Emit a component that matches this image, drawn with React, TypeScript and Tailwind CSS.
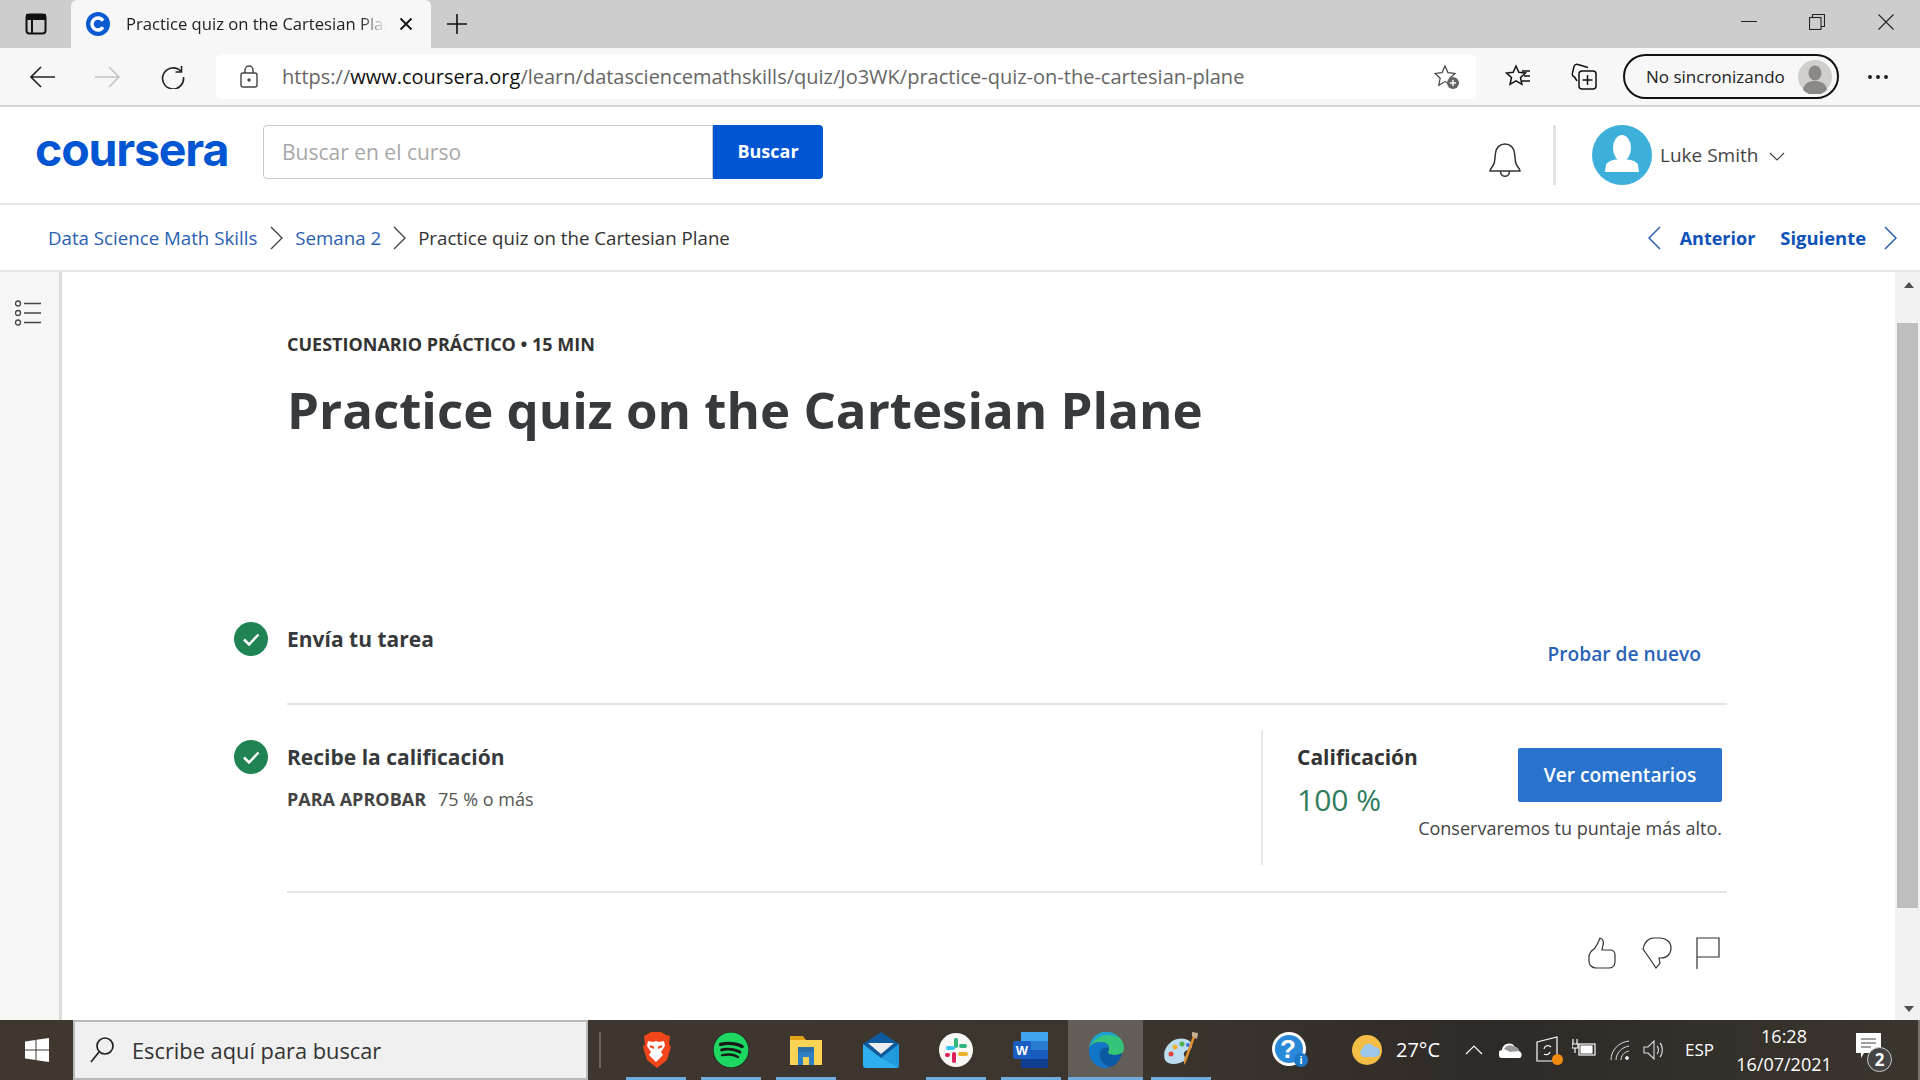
import React from "react";
import { FaSpotify } from "react-icons/fa";

const Stroke = ({ w, h, vb, children, className = "", sw = 1.5, color = "currentColor" }: any) => (
  <svg width={w} height={h} viewBox={vb ?? `0 0 ${w} ${h}`} fill="none" stroke={color} strokeWidth={sw} className={`shrink-0 ${className}`}>
    {children}
  </svg>
);

const TabBar = () => (
  <div className="flex h-[48px] bg-[#cdcdcd] shrink-0">
    <div className="w-[71px] flex items-center justify-center">
      <Stroke w={22} h={22} sw={2} color="#111">
        <rect x="1.5" y="1.5" width="19" height="19" rx="3" />
        <path d="M1.5 6h19M7 6v14.5" />
        <path d="M2 2h18v4H2z" fill="#111" />
      </Stroke>
    </div>
    <div className="w-[360px] bg-[#f7f7f7] rounded-t-[6px] flex items-center pl-[15px]">
      <svg width="24" height="24" viewBox="0 0 24 24" className="shrink-0">
        <circle cx="12" cy="12" r="12" fill="#0a5bd3" />
        <path d="M17 8.7A6 6 0 1 0 17 15.3" fill="none" stroke="#fff" strokeWidth="3.4" />
      </svg>
      <div className="ml-[16px] w-[260px] overflow-hidden whitespace-nowrap text-[16.6px] text-[#222] [mask-image:linear-gradient(90deg,#000_90%,transparent)]">
        Practice quiz on the Cartesian Plane
      </div>
      <Stroke w={14} h={14} sw={1.8} color="#111" className="ml-[13px]">
        <path d="M1.5 1.5l11 11M12.5 1.5l-11 11" />
      </Stroke>
    </div>
    <div className="ml-[15px] flex items-center">
      <Stroke w={22} h={22} sw={1.6} color="#111">
        <path d="M11 1v20M1 11h20" />
      </Stroke>
    </div>
    <div className="ml-auto flex items-start pt-[21px]">
      <div className="w-[16px] h-[1px] bg-[#222] mr-[52px]" />
      <Stroke w={16} h={16} sw={1.1} color="#222" className="mt-[-7px] mr-[53px]">
        <rect x="0.5" y="3.5" width="11.5" height="12" />
        <path d="M3.5 3.5V0.5H15.5V12.5H12" />
      </Stroke>
      <Stroke w={16} h={16} sw={1.1} color="#222" className="mt-[-7px] mr-[26px]">
        <path d="M0.5 0.5l15 15M15.5 0.5l-15 15" />
      </Stroke>
    </div>
  </div>
);

const Toolbar = () => (
  <div className="flex items-center h-[59px] bg-[#f7f7f7] border-b-[2px] border-[#d2d2d2] shrink-0">
    <div className="w-[216px] flex items-center pl-[30px]">
      <Stroke w={25} h={22} sw={1.6} color="#222">
        <path d="M25 11H1M11 1L1 11l10 10" />
      </Stroke>
      <Stroke w={25} h={22} sw={1.6} color="#c4c4c4" className="ml-[40px]">
        <path d="M0 11h24M14 1l10 10-10 10" />
      </Stroke>
      <Stroke w={24} h={24} sw={1.6} color="#222" className="ml-[41px]">
        <path d="M20 6.5A10.5 10.5 0 1 0 22.5 12" />
        <path d="M20.5 1v6h-6" />
      </Stroke>
    </div>
    <div className="w-[1260px] h-[45px] bg-white rounded-[6px] flex items-center pl-[24px]">
      <Stroke w={18} h={23} sw={1.4} color="#444">
        <rect x="1" y="8" width="16" height="14" rx="2" />
        <path d="M5 8V5a4 4 0 0 1 8 0v3" />
        <circle cx="9" cy="15" r="1" fill="#444" />
      </Stroke>
      <div className="ml-[24px] text-[20px] whitespace-nowrap text-[#666]">
        https://<span className="text-[#111]">www.coursera.org</span>/learn/datasciencemathskills/quiz/Jo3WK/practice-quiz-on-the-cartesian-plane
      </div>
      <svg width="26" height="26" viewBox="0 0 26 26" className="ml-auto mr-[16px] shrink-0">
        <path d="M11 2l3 6.6 7 .8-5.2 4.8 1.4 7L11 17.600l-6.200 3.600 1.400-7L1 9.400l7-.8z" fill="none" stroke="#444" strokeWidth="1.2" />
        <circle cx="19" cy="19" r="6" fill="#666" />
        <path d="M19 16v6M16 19h6" stroke="#fff" strokeWidth="1.4" />
      </svg>
    </div>
    <svg width="26" height="26" viewBox="0 0 26 26" className="ml-[29px] shrink-0" fill="none" stroke="#111" strokeWidth="1.5">
      <path d="M11 2l2.800 6.200 6.700.8-5 4.500 1.400 6.800L11 16.900l-5.900 3.400 1.400-6.800-5-4.500 6.700-.8z" />
      <path d="M17 7h8M19 12h6M17 17h8" />
    </svg>
    <svg width="26" height="28" viewBox="0 0 26 28" className="ml-[40px] shrink-0" fill="none" stroke="#111" strokeWidth="1.5">
      <rect x="8" y="8" width="17" height="18" rx="3" />
      <path d="M16.500 12v10M11.500 17h10" />
      <path d="M17 4.500 7 1.500a3 3 0 0 0-4 2L1.500 10a3 3 0 0 0 2 4L6 18" />
    </svg>
    <div className="ml-[26px] w-[216px] h-[45px] rounded-full border-[2px] border-[#111] flex items-center pl-[21px] text-[17px] text-[#222] whitespace-nowrap">
      No sincronizando
      <svg width="34" height="34" viewBox="0 0 34 34" className="ml-[13px] shrink-0">
        <circle cx="17" cy="17" r="17" fill="#d0cfcb" />
        <ellipse cx="17" cy="13" rx="6.500" ry="7.500" fill="#8b8985" />
        <path d="M5 30c1-7 6-9 12-9s11 2 12 9a17 17 0 0 1-24 0z" fill="#8b8985" />
      </svg>
    </div>
    <div className="ml-[29px] flex gap-[4px]">
      <span className="w-[4px] h-[4px] rounded-full bg-[#222]" />
      <span className="w-[4px] h-[4px] rounded-full bg-[#222]" />
      <span className="w-[4px] h-[4px] rounded-full bg-[#222]" />
    </div>
  </div>
);

const Header = () => (
  <div className="flex items-center h-[98px] pb-[7px] bg-white border-b-[2px] border-[#e6e6e6] shrink-0">
    <div className="w-[263px] pl-[35px] [font-family:Inter,sans-serif] font-bold text-[46.5px] leading-none tracking-[-1.2px] text-[#0056d2] pb-[4px]">
      coursera
    </div>
    <div className="w-[450px] h-[54px] border border-[#c8c8c8] rounded-l-[4px] flex items-center pl-[18px] pt-[3px] text-[21px] text-[#a8a8a8]">
      Buscar en el curso
    </div>
    <div className="w-[110px] h-[54px] bg-[#0056d2] rounded-r-[4px] flex items-center justify-center text-white font-bold text-[18px]">
      Buscar
    </div>
    <Stroke w={34} h={36} sw={1.5} color="#333" className="ml-[665px] mt-[16px]">
      <path d="M2 29c0-3 3.500-4 4.500-9l1-9c.5-5 4-9 9.500-9s9 4 9.500 9l1 9c1 5 4.500 6 4.500 9z" />
      <path d="M12.500 29c0 7 9 7 9 0" />
    </Stroke>
    <div className="ml-[31px] mt-[7px] w-[3px] h-[60px] bg-[#e3e3e3]" />
    <svg width="60" height="60" viewBox="0 0 60 60" className="ml-[36px] mt-[7px] shrink-0">
      <circle cx="30" cy="30" r="30" fill="#3cafda" />
      <ellipse cx="30" cy="23" rx="9" ry="13" fill="#fff" />
      <path d="M13 47l1-7c1-4 9-6 16-6s15 2 16 6l1 7z" fill="#fff" />
    </svg>
    <div className="ml-[8px] mt-[7px] text-[19px] text-[#444] whitespace-nowrap">Luke Smith</div>
    <Stroke w={16} h={9} sw={1.2} color="#444" className="ml-[11px] mt-[9px]">
      <path d="M1 1l7 7 7-7" />
    </Stroke>
  </div>
);

const Breadcrumb = () => (
  <div className="flex items-center h-[67px] pt-[1px] bg-white border-b-[2px] border-[#e6e6e6] shrink-0 text-[18.7px] pl-[48px] pr-[23px]">
    <span className="text-[#2a5fb0]">Data Science Math Skills</span>
    <Stroke w={13} h={24} sw={1.4} color="#444" className="ml-[13px]"><path d="M1 1l11 11L1 23" /></Stroke>
    <span className="ml-[12px] text-[#2a5fb0]">Semana 2</span>
    <Stroke w={13} h={24} sw={1.4} color="#444" className="ml-[12px]"><path d="M1 1l11 11L1 23" /></Stroke>
    <span className="ml-[12px] text-[#333]">Practice quiz on the Cartesian Plane</span>
    <Stroke w={13} h={24} sw={1.5} color="#2a5fb0" className="ml-auto"><path d="M12 1L1 12l11 11" /></Stroke>
    <span className="ml-[19px] text-[#0d51b9] font-bold text-[18px]">Anterior</span>
    <span className="ml-[25px] text-[#0d51b9] font-bold text-[18.4px]">Siguiente</span>
    <Stroke w={13} h={24} sw={1.5} color="#2a5fb0" className="ml-[18px]"><path d="M1 1l11 11L1 23" /></Stroke>
  </div>
);

const CheckCircle = ({ className = "" }: any) => (
  <svg width="34" height="34" viewBox="0 0 34 34" className={`shrink-0 ${className}`}>
    <circle cx="17" cy="17" r="17" fill="#1f8354" />
    <path d="M10 17.500l5 5 9.500-10" fill="none" stroke="#fff" strokeWidth="2.500" />
  </svg>
);

const Main = () => (
  <div className="flex flex-1 min-h-0 bg-white">
    <div className="w-[62px] shrink-0 bg-[#f6f6f6] border-r-[3px] border-[#dcdcdc] pl-[15px] pt-[28px]">
      <svg width="26" height="26" viewBox="0 0 26 26" fill="none" stroke="#444" strokeWidth="1.3">
        <circle cx="3" cy="3.500" r="2.500" /><circle cx="3" cy="13" r="2.500" /><circle cx="3" cy="22.500" r="2.500" />
        <path d="M9 3.500h17M9 13h17M9 22.500h17" />
      </svg>
    </div>
    <div className="flex-1 min-w-0 pl-[172px] pr-[168px]">
      <div className="pl-[53px] pt-[60px]">
        <div className="text-[18px] leading-[24px] font-bold text-[#333]">CUESTIONARIO PRÁCTICO • 15 MIN</div>
        <h1 className="mt-[19px] text-[51px] leading-[68px] font-bold text-[#373a3c] whitespace-nowrap">Practice quiz on the Cartesian Plane</h1>
      </div>
      <div className="mt-[180px] flex items-start h-[80px]">
        <CheckCircle className="mt-[-1px]" />
        <div className="ml-[19px] mt-[-1px] text-[21px] leading-[34px] font-bold text-[#373a3c]">Envía tu tarea</div>
        <div className="ml-auto mr-[26px] mt-[14px] text-[19.2px] leading-[34px] font-semibold text-[#2a63b7]">Probar de nuevo</div>
      </div>
      <div className="ml-[53px] h-[2px] bg-[#e5e5e5]" />
      <div className="flex items-start pt-[26px]">
        <CheckCircle className="mt-[9px]" />
        <div className="ml-[19px] mt-[9px]">
          <div className="text-[21px] leading-[34px] font-bold text-[#373a3c]">Recibe la calificación</div>
          <div className="mt-[11px] text-[18px] leading-[28px] text-[#555]"><span className="font-bold text-[#444]">PARA APROBAR</span><span className="ml-[12px]">75 % o más</span></div>
        </div>
        <div className="ml-auto mt-[-1px] w-[466px] h-[135px] border-l-[2px] border-[#e8e8e8] flex pl-[34px] pr-[5px]">
          <div className="pt-[10px]">
            <div className="text-[21px] leading-[34px] font-bold text-[#333]">Calificación</div>
            <div className="mt-[3px] text-[30px] leading-[46px] text-[#2f7d5c]">100 %</div>
          </div>
          <div className="ml-auto flex flex-col items-end pt-[18px]">
            <div className="w-[204px] h-[54px] bg-[#2a73cc] rounded-[2px] flex items-center justify-center text-white text-[19.2px] font-semibold">Ver comentarios</div>
            <div className="mt-[13px] text-[18px] leading-[26px] text-[#444] whitespace-nowrap">Conservaremos tu puntaje más alto.</div>
          </div>
        </div>
      </div>
      <div className="ml-[53px] mt-[26px] h-[2px] bg-[#e5e5e5]" />
      <div className="flex justify-end items-start gap-[24px] pt-[44px] pr-[7px]">
        <Stroke w={30} h={32} sw={1.2} color="#333">
          <path d="M1 20c0-4 2-6 5-8 2-2 4-6 6-11 3 1 4 4 3 7l-1 5h8c3 0 5 2 5 5v7c0 4-3 6-6 6H8c-4 0-7-3-7-7z" />
        </Stroke>
        <Stroke w={30} h={32} sw={1.2} color="#333">
          <path d="M1 12C2 6 6 1 12 1h6c6 0 11 4 11 10s-4 10-10 10h-2l1 5-4 5-6-9-7-10z" />
        </Stroke>
        <Stroke w={24} h={32} sw={1.2} color="#333">
          <path d="M1 32V1h22v19H1" />
        </Stroke>
      </div>
    </div>
    <div className="w-[25px] shrink-0 bg-[#f1f1f1] pl-[2px] relative">
      <div className="h-[51px] flex items-center justify-center"><div className="w-0 h-0 border-x-[5px] border-x-transparent border-b-[6px] border-b-[#505050] mb-[26px]" /></div>
      <div className="w-[21px] h-[585px] bg-[#bdbdbd]" />
      <div className="flex justify-center mt-[98px]"><div className="w-0 h-0 border-x-[5px] border-x-transparent border-t-[6px] border-t-[#505050]" /></div>
    </div>
  </div>
);

const Slot = ({ under = true, active = false, children }: any) => (
  <div className={`relative w-[75px] h-[60px] flex items-center justify-center ${active ? "bg-[#625d57]" : ""}`}>
    {children}
    {under && <div className={`absolute bottom-0 h-[3px] bg-[#6fade0] ${active ? "left-0 right-0" : "left-[8px] right-[7px]"}`} />}
  </div>
);

const Taskbar = () => (
  <div className="flex items-stretch h-[60px] bg-[linear-gradient(90deg,#40372f,#3c352e_60%,#2e2a27_78%,#3a352d)] shrink-0 border-r-[2px] border-[#77736d]">
    <div className="w-[73px] flex items-center justify-center">
      <svg width="24" height="24" viewBox="0 0 24 24" fill="#fff">
        <path d="M0 3.500l10.500-1.500v9.500H0zM11.500 1.800L24 0v11.500H11.500zM0 12.500h10.500V22L0 20.500zM11.500 12.500H24V24l-12.500-1.800z" />
      </svg>
    </div>
    <div className="w-[515px] bg-[#f0f0f0] border-[2px] border-[#b9b9b9] flex items-center pl-[15px] text-[21.8px] text-[#333] pt-[3px]">
      <Stroke w={24} h={26} sw={1.7} color="#222" className="mt-[-3px]">
        <circle cx="15" cy="9" r="8" />
        <path d="M9 15L1 25" />
      </Stroke>
      <span className="ml-[18px]">Escribe aquí para buscar</span>
    </div>
    <div className="w-[30px] flex items-center pl-[11px]"><div className="w-[2px] h-[36px] bg-[#6a645d]" /></div>
    <Slot>
      <svg width="30" height="36" viewBox="0 0 30 36">
        <path d="M5 3l5-3h10l5 3 4 1-1 8 2 3-4 13-10 8-10-8L2 15l2-3-1-8z" fill="#f1451b" />
        <path d="M7 9l5 1 3-1 3 1 5-1 1 5-4 6 2 3-7 7-7-7 2-3-4-6z" fill="#fff" />
        <path d="M9 14l4 2M21 14l-4 2" stroke="#f1451b" strokeWidth="2" />
      </svg>
    </Slot>
    <Slot><FaSpotify className="text-[#1ed760] bg-[#1a1a1a] rounded-full" size={36} /></Slot>
    <Slot>
      <svg width="32" height="32" viewBox="0 0 32 32">
        <path d="M0 2h13l3 4H0z" fill="#e0a118" />
        <rect x="0" y="6" width="32" height="25" fill="#fbd354" />
        <path d="M8 13h16v18h-5v-8h-6v8H8z" fill="#2e7fc4" />
        <rect x="8" y="13" width="16" height="5" fill="#2c6fa8" />
      </svg>
    </Slot>
    <Slot under={false}>
      <svg width="36" height="36" viewBox="0 0 36 36">
        <path d="M0 12L18 0l18 12-18 14z" fill="#0f5a9c" />
        <path d="M5 11h26l-13 11z" fill="#ededed" />
        <path d="M0 12l18 14 18-14v21a3 3 0 0 1-3 3H3a3 3 0 0 1-3-3z" fill="#2fb0ee" />
        <path d="M18 26l18-14v24z" fill="#1a90d8" opacity=".7" />
      </svg>
    </Slot>
    <Slot>
      <svg width="34" height="34" viewBox="0 0 34 34">
        <circle cx="17" cy="17" r="17" fill="#f7f7f5" />
        <rect x="15" y="5" width="4" height="10" rx="2" fill="#2eb67d" />
        <rect x="7" y="13" width="9" height="4" rx="2" fill="#36c5f0" />
        <rect x="19" y="19" width="10" height="4" rx="2" fill="#ecb22e" />
        <rect x="13" y="19" width="4" height="11" rx="2" fill="#e01e5a" />
        <rect x="6" y="20" width="5" height="4" rx="2" fill="#e01e5a" />
        <rect x="20" y="11" width="8" height="4" rx="2" fill="#2eb67d" />
      </svg>
    </Slot>
    <Slot>
      <svg width="36" height="36" viewBox="0 0 36 36">
        <rect x="8" y="0" width="27" height="9" fill="#41a5ee" />
        <rect x="8" y="9" width="27" height="9" fill="#2b7cd3" />
        <rect x="8" y="18" width="27" height="9" fill="#185abd" />
        <rect x="8" y="27" width="27" height="9" rx="1" fill="#103f91" />
        <rect x="0" y="9" width="18" height="18" rx="2" fill="#1a5dc0" />
        <text x="9" y="23" textAnchor="middle" fill="#fff" fontSize="13" fontWeight="700" fontFamily="Liberation Sans">W</text>
      </svg>
    </Slot>
    <Slot active>
      <svg width="36" height="36" viewBox="0 0 36 36">
        <path d="M1 17C2 7 9 0 18 0c10 0 18 7 18 16 0 5-4 7-9 7-4 0-7-1-7-3 0-1 1-2 1-4 0-4-4-6-9-6-5 0-10 3-11 7z" fill="#34c47a" />
        <path d="M1 17C2 7 9 0 18 0c5 0 10 2 13 6-3-2-7-3-11-3C11 3 4 9 1 17z" fill="#1e9fd8" />
        <path d="M1 17c1-4 6-7 11-7 5 0 9 2 9 6-3-1-8 0-9 5-1 6 3 12 10 14-1 .5-3 1-4 1C8 36 0 28 1 17z" fill="#1276c8" />
        <path d="M12 21c1-5 6-6 9-5 0 2-1 3-1 4 0 2 3 3 7 3 2 0 5-1 7-2-1 7-7 13-12 14-7-2-11-8-10-14z" fill="#0c59a4" />
      </svg>
    </Slot>
    <Slot>
      <svg width="36" height="36" viewBox="0 0 36 36">
        <path d="M2 28c-3-8 2-18 12-21 7-2 15 1 15 7 0 5-7 3-8 7-1 3 3 5 0 8-4 3-16 5-19-1z" fill="#bcdcf0" />
        <circle cx="8" cy="22" r="2.500" fill="#e04040" /><circle cx="12" cy="15" r="2.500" fill="#f0b030" /><circle cx="19" cy="12" r="2.500" fill="#50b050" /><circle cx="25" cy="13" r="2" fill="#4070d0" />
        <path d="M31 1l2 2-10 27-2 3 0-5z" fill="#e09030" />
        <path d="M29 0l6 1-1 6-5-3z" fill="#c8b090" />
      </svg>
    </Slot>
    <div className="ml-[54px] flex items-center relative">
      <svg width="36" height="40" viewBox="0 0 36 40">
        <circle cx="17" cy="19" r="17" fill="#fff" />
        <circle cx="17" cy="19" r="14" fill="#2a88d8" />
        <text x="16" y="28" textAnchor="middle" fill="#fff" fontSize="26" fontWeight="700" fontFamily="Liberation Sans">?</text>
        <circle cx="29" cy="30" r="7" fill="#1e78c8" />
        <text x="29" y="34" textAnchor="middle" fill="#fff" fontSize="11" fontWeight="700" fontFamily="Liberation Sans">i</text>
      </svg>
    </div>
    <div className="ml-[44px] flex items-center">
      <svg width="30" height="34" viewBox="0 0 30 34">
        <circle cx="15" cy="17" r="15" fill="#f4bd45" />
        <path d="M11 24a5 5 0 0 1 0-9 6 6 0 0 1 11-1 5 5 0 0 1 6 5 5 5 0 0 1-4 5z" fill="#9bc8ea" />
      </svg>
    </div>
    <div className="ml-[14px] flex items-center text-[20px] text-white w-[48px]">27°C</div>
    <div className="ml-[21px] flex items-center">
      <Stroke w={18} h={10} sw={1.2} color="#fff"><path d="M1 9l8-8 8 8" /></Stroke>
    </div>
    <div className="ml-[16px] flex items-center">
      <svg width="24" height="16" viewBox="0 0 24 16"><path d="M4 16a4 4 0 0 1-1-8 7 7 0 0 1 13-3 5 5 0 0 1 4 4 4 4 0 0 1 1 7z" fill="#fff" /><path d="M5 7a7 7 0 0 1 11-2 5 5 0 0 1 4 4l-9 1z" fill="#999" /></svg>
    </div>
    <div className="ml-[13px] flex items-center relative">
      <Stroke w={24} h={28} sw={1.2} color="#fff">
        <path d="M1 6l20-5v24H1z" /><path d="M8 13a4 4 0 0 1 7-2M14 16a4 4 0 0 1-6 2" />
      </Stroke>
      <div className="absolute right-[-3px] top-[34px] w-[11px] h-[11px] rounded-full bg-[#f08a10]" />
    </div>
    <div className="ml-[12px] flex items-center">
      <Stroke w={24} h={20} sw={1.2} color="#fff" className="mt-[-4px]">
        <path d="M1 1v5M5 1v5M0 6h6v4H0zM3 10v5" /><rect x="7" y="6" width="16" height="11" /><rect x="9" y="8" width="11" height="7" fill="#fff" />
      </Stroke>
    </div>
    <div className="ml-[14px] flex items-center">
      <Stroke w={20} h={20} sw={1} color="#ddd">
        <path d="M1 20C1 10 9 2 19 1M6 20C6 13 12 7 19 6M11 20c0-4 3-8 8-9" />
        <circle cx="17" cy="18" r="1.500" fill="#fff" />
      </Stroke>
    </div>
    <div className="ml-[13px] flex items-center">
      <Stroke w={22} h={22} sw={1.1} color="#ddd">
        <path d="M1 8h4l6-6v18l-6-6H1zM14 7c2 2 2 6 0 8M17 4c3 3 3 11 0 14" />
      </Stroke>
    </div>
    <div className="ml-[20px] flex items-center text-[17px] text-white">ESP</div>
    <div className="ml-[22px] w-[96px] flex flex-col items-center justify-center text-[18px] leading-[28px] text-white whitespace-nowrap">
      <div>16:28</div>
      <div>16/07/2021</div>
    </div>
    <div className="ml-[24px] flex items-center relative">
      <svg width="26" height="26" viewBox="0 0 26 26" className="mt-[-8px]">
        <path d="M0 0h25v20H8l-3 5v-5H0z" fill="#fff" />
        <path d="M5 6h15M5 10h15M5 14h10" stroke="#444" strokeWidth="1.2" />
      </svg>
      <div className="absolute left-[11px] top-[27px] w-[25px] h-[25px] rounded-full border border-[#ccc] bg-[#444] flex items-center justify-center text-[17px] font-bold text-white">2</div>
    </div>
  </div>
);

export default function App() {
  return (
    <div className="w-[1920px] h-[1080px] flex flex-col overflow-hidden [font-family:'Open_Sans',sans-serif]">
      <TabBar />
      <Toolbar />
      <Header />
      <Breadcrumb />
      <Main />
      <Taskbar />
    </div>
  );
}
